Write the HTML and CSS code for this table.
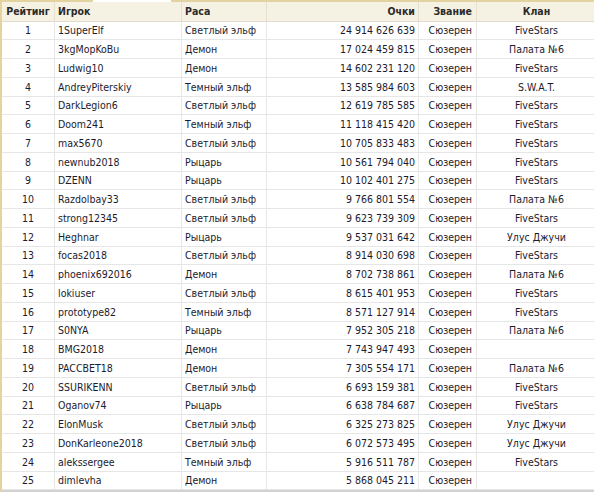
FILE: index.html
```html
<!DOCTYPE html>
<html lang="ru">
<head>
<meta charset="utf-8">
<title>Рейтинг</title>
<link rel="stylesheet" href="styles.css">
</head>
<body>
<div class="table">
  <div class="topbar"><span class="seg seg-a"></span><span class="seg seg-gap"></span><span class="seg seg-b"></span></div>
  <div class="row head">
    <div class="c c1">Рейтинг</div>
    <div class="c c2">Игрок</div>
    <div class="c c3">Раса</div>
    <div class="c c4">Очки</div>
    <div class="c c5">Звание</div>
    <div class="c c6">Клан</div>
  </div>
  <div class="row"><div class="c c1">1</div><div class="c c2">1SuperElf</div><div class="c c3">Светлый эльф</div><div class="c c4">24 914 626 639</div><div class="c c5">Сюзерен</div><div class="c c6">FiveStars</div></div>
  <div class="row"><div class="c c1">2</div><div class="c c2">3kgMopKoBu</div><div class="c c3">Демон</div><div class="c c4">17 024 459 815</div><div class="c c5">Сюзерен</div><div class="c c6">Палата №6</div></div>
  <div class="row"><div class="c c1">3</div><div class="c c2">Ludwig10</div><div class="c c3">Демон</div><div class="c c4">14 602 231 120</div><div class="c c5">Сюзерен</div><div class="c c6">FiveStars</div></div>
  <div class="row"><div class="c c1">4</div><div class="c c2">AndreyPiterskiy</div><div class="c c3">Темный эльф</div><div class="c c4">13 585 984 603</div><div class="c c5">Сюзерен</div><div class="c c6">S.W.A.T.</div></div>
  <div class="row"><div class="c c1">5</div><div class="c c2">DarkLegion6</div><div class="c c3">Светлый эльф</div><div class="c c4">12 619 785 585</div><div class="c c5">Сюзерен</div><div class="c c6">FiveStars</div></div>
  <div class="row"><div class="c c1">6</div><div class="c c2">Doom241</div><div class="c c3">Темный эльф</div><div class="c c4">11 118 415 420</div><div class="c c5">Сюзерен</div><div class="c c6">FiveStars</div></div>
  <div class="row"><div class="c c1">7</div><div class="c c2">max5670</div><div class="c c3">Светлый эльф</div><div class="c c4">10 705 833 483</div><div class="c c5">Сюзерен</div><div class="c c6">FiveStars</div></div>
  <div class="row"><div class="c c1">8</div><div class="c c2">newnub2018</div><div class="c c3">Рыцарь</div><div class="c c4">10 561 794 040</div><div class="c c5">Сюзерен</div><div class="c c6">FiveStars</div></div>
  <div class="row"><div class="c c1">9</div><div class="c c2">DZENN</div><div class="c c3">Рыцарь</div><div class="c c4">10 102 401 275</div><div class="c c5">Сюзерен</div><div class="c c6">FiveStars</div></div>
  <div class="row"><div class="c c1">10</div><div class="c c2">Razdolbay33</div><div class="c c3">Светлый эльф</div><div class="c c4">9 766 801 554</div><div class="c c5">Сюзерен</div><div class="c c6">Палата №6</div></div>
  <div class="row"><div class="c c1">11</div><div class="c c2">strong12345</div><div class="c c3">Светлый эльф</div><div class="c c4">9 623 739 309</div><div class="c c5">Сюзерен</div><div class="c c6">FiveStars</div></div>
  <div class="row"><div class="c c1">12</div><div class="c c2">Heghnar</div><div class="c c3">Рыцарь</div><div class="c c4">9 537 031 642</div><div class="c c5">Сюзерен</div><div class="c c6">Улус Джучи</div></div>
  <div class="row"><div class="c c1">13</div><div class="c c2">focas2018</div><div class="c c3">Светлый эльф</div><div class="c c4">8 914 030 698</div><div class="c c5">Сюзерен</div><div class="c c6">FiveStars</div></div>
  <div class="row"><div class="c c1">14</div><div class="c c2">phoenix692016</div><div class="c c3">Демон</div><div class="c c4">8 702 738 861</div><div class="c c5">Сюзерен</div><div class="c c6">Палата №6</div></div>
  <div class="row"><div class="c c1">15</div><div class="c c2">lokiuser</div><div class="c c3">Светлый эльф</div><div class="c c4">8 615 401 953</div><div class="c c5">Сюзерен</div><div class="c c6">FiveStars</div></div>
  <div class="row"><div class="c c1">16</div><div class="c c2">prototype82</div><div class="c c3">Темный эльф</div><div class="c c4">8 571 127 914</div><div class="c c5">Сюзерен</div><div class="c c6">FiveStars</div></div>
  <div class="row"><div class="c c1">17</div><div class="c c2">S0NYA</div><div class="c c3">Рыцарь</div><div class="c c4">7 952 305 218</div><div class="c c5">Сюзерен</div><div class="c c6">Палата №6</div></div>
  <div class="row"><div class="c c1">18</div><div class="c c2">BMG2018</div><div class="c c3">Демон</div><div class="c c4">7 743 947 493</div><div class="c c5">Сюзерен</div><div class="c c6"></div></div>
  <div class="row"><div class="c c1">19</div><div class="c c2">PACCBET18</div><div class="c c3">Демон</div><div class="c c4">7 305 554 171</div><div class="c c5">Сюзерен</div><div class="c c6">Палата №6</div></div>
  <div class="row"><div class="c c1">20</div><div class="c c2">SSURIKENN</div><div class="c c3">Светлый эльф</div><div class="c c4">6 693 159 381</div><div class="c c5">Сюзерен</div><div class="c c6">FiveStars</div></div>
  <div class="row"><div class="c c1">21</div><div class="c c2">Oganov74</div><div class="c c3">Рыцарь</div><div class="c c4">6 638 784 687</div><div class="c c5">Сюзерен</div><div class="c c6">FiveStars</div></div>
  <div class="row"><div class="c c1">22</div><div class="c c2">ElonMusk</div><div class="c c3">Светлый эльф</div><div class="c c4">6 325 273 825</div><div class="c c5">Сюзерен</div><div class="c c6">Улус Джучи</div></div>
  <div class="row"><div class="c c1">23</div><div class="c c2">DonKarleone2018</div><div class="c c3">Светлый эльф</div><div class="c c4">6 072 573 495</div><div class="c c5">Сюзерен</div><div class="c c6">Улус Джучи</div></div>
  <div class="row"><div class="c c1">24</div><div class="c c2">alekssergee</div><div class="c c3">Темный эльф</div><div class="c c4">5 916 511 787</div><div class="c c5">Сюзерен</div><div class="c c6">FiveStars</div></div>
  <div class="row"><div class="c c1">25</div><div class="c c2">dimlevha</div><div class="c c3">Демон</div><div class="c c4">5 868 045 211</div><div class="c c5">Сюзерен</div><div class="c c6"></div></div>
</div>
</body>
</html>
```
FILE: styles.css
```css
html, body {
  margin: 0;
  padding: 0;
  background: #ffffff;
  overflow: hidden;
}
body {
  font-family: "DejaVu Sans Condensed", "DejaVu Sans", sans-serif;
  font-size: 10.5px;
  color: #1b1b2e;
}
.table {
  width: 620px;
  border-left: 2px solid #e3d3a0;
  border-bottom: 2px solid #d2d2d2;
  box-sizing: border-box;
}
.topbar {
  display: flex;
  height: 2px;
}
.seg { display: block; height: 2px; }
.seg-a { width: 91px; background: #e3d3a0; }
.seg-gap { width: 78px; background: #ffffff; }
.seg-b { flex: 1; background: #e3d3a0; }
.row {
  display: grid;
  grid-template-columns: 53px 127px 85px 152px 58px 120px;
  height: 18.75px;
  box-sizing: border-box;
  border-bottom: 1px solid #e6e6e6;
}
.row.head {
  height: 19.6px;
  background: #f6f2e3;
  font-weight: bold;
  color: #2b2b2b;
  border-bottom: 1px solid #e2dccb;
}
.c {
  display: flex;
  align-items: center;
  border-right: 1px solid #e6e6e6;
  white-space: nowrap;
  overflow: hidden;
  padding: 0 3px;
  box-sizing: border-box;
}
.head .c {
  border-right-color: #e6e0cc;
}
.c1 { justify-content: center; }
.c2, .c3 { justify-content: flex-start; }
.c4 { justify-content: flex-end; }
.c5 { justify-content: flex-end; padding-right: 4px; }
.c6 { justify-content: center; }
```
